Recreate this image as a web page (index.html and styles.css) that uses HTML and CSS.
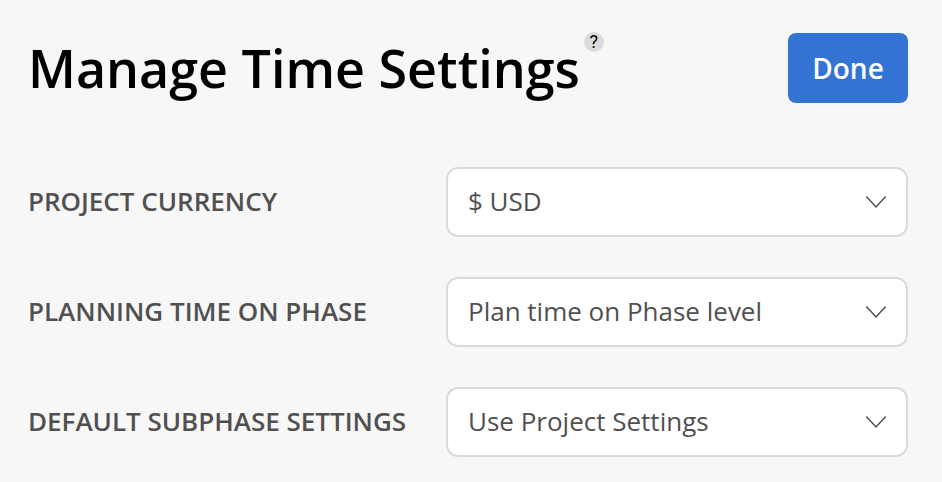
FILE: index.html
```
<!DOCTYPE html>
<html>
<head>
	<meta charset="utf-8">
	<title>Manage Time Settings</title>
	<link rel="stylesheet" href="styles.css">
</head>
<body>
	<div class="header">
		<h1>Manage Time Settings</h1>
		<span class="help">?</span>
		<button class="done">Done</button>
	</div>
	<div class="settings">
		<div class="row">
			<label>PROJECT CURRENCY</label>
			<div class="select">
				<span>$ USD</span>
				<svg class="arrow" width="22" height="14" viewBox="0 0 22 14"><path d="M1.3 1.5L11 12L20.7 1.5"/></svg>
			</div>
		</div>
		<div class="row">
			<label>PLANNING TIME ON PHASE</label>
			<div class="select">
				<span>Plan time on Phase level</span>
				<svg class="arrow" width="22" height="14" viewBox="0 0 22 14"><path d="M1.3 1.5L11 12L20.7 1.5"/></svg>
			</div>
		</div>
		<div class="row">
			<label>DEFAULT SUBPHASE SETTINGS</label>
			<div class="select">
				<span>Use Project Settings</span>
				<svg class="arrow" width="22" height="14" viewBox="0 0 22 14"><path d="M1.3 1.5L11 12L20.7 1.5"/></svg>
			</div>
		</div>
	</div>
</body>
</html>
```
FILE: styles.css
```
	*{
		box-sizing: border-box;
	}
	body{
		margin: 0;
		padding: 33px 34px 0 28px;
		background: #f7f7f7;
		color: #505050;
		font-family: "Open Sans", sans-serif;
	}
	.header{
		display: flex;
		align-items: flex-start;
		height: 70px;
	}
	h1{
		margin: 0;
		color: #000;
		font-size: 52px;
		font-weight: 600;
		line-height: 70px;
		white-space: nowrap;
	}
	.help{
		width: 20px;
		height: 20px;
		margin: -1px 0 0 4px;
		border-radius: 50%;
		background: #dbdbdb;
		color: #000;
		font-family: Roboto, sans-serif;
		font-size: 18px;
		line-height: 20px;
		text-align: center;
	}
	.done{
		width: 120px;
		height: 70px;
		margin-left: auto;
		padding: 0;
		border: 0;
		border-radius: 8px;
		background: #3273d4;
		color: #fff;
		font: 600 28px "Open Sans", sans-serif;
	}
	.settings{
		display: flex;
		flex-direction: column;
		gap: 40px;
		margin-top: 64px;
	}
	.row{
		display: flex;
		align-items: center;
		justify-content: space-between;
	}
	label{
		padding-bottom: 2px;
		font-size: 26px;
		font-weight: 600;
		white-space: nowrap;
	}
	.select{
		display: flex;
		align-items: center;
		justify-content: space-between;
		width: 462px;
		height: 70px;
		padding: 0 19px 0 20px;
		border: 2px solid #dadada;
		border-radius: 12px;
		background: #fff;
		font-size: 26px;
	}
	.select span{
		padding-bottom: 2px;
	}
	.arrow path{
		fill: none;
		stroke: #505050;
		stroke-width: 1.5;
	}
```
